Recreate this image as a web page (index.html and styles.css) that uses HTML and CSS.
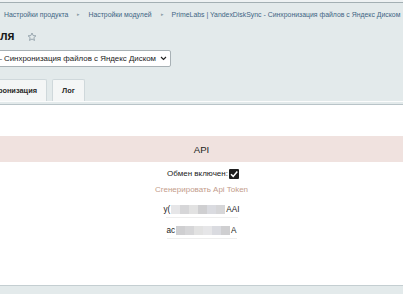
FILE: index.html
```html
<!DOCTYPE html>
<html lang="ru">
<head>
<meta charset="utf-8">
<link rel="stylesheet" href="styles.css">
</head>
<body>
<div class="topline"></div>
<nav class="crumbs">
  <a class="crumb">Настройки продукта</a>
  <span class="sep">▸</span>
  <a class="crumb">Настройки модулей</a>
  <span class="sep">▸</span>
  <a class="crumb">PrimeLabs | YandexDiskSync - Синхронизация файлов с Яндекс Диском</a>
</nav>
<div class="titlerow">
  <h1 class="title">ля</h1>
  <svg class="star" viewBox="0 0 12 12" width="10" height="10"><path d="M6 1.2 L7.4 4.3 L10.7 4.6 L8.2 6.8 L9 10.1 L6 8.4 L3 10.1 L3.8 6.8 L1.3 4.6 L4.6 4.3 Z" fill="none" stroke="#8a9aa3" stroke-width="1" stroke-linejoin="round"/></svg>
</div>
<div class="selrow">
  <div class="select"><span class="seltext">– Синхронизация файлов с Яндекс Диском</span>
    <svg class="chev" viewBox="0 0 8 6" width="7" height="5"><path d="M1 1.2 L4 4.2 L7 1.2" fill="none" stroke="#222" stroke-width="1.4"/></svg>
  </div>
</div>
<div class="tabs">
  <div class="tab tab-first">ронизация</div>
  <div class="tab">Лог</div>
</div>
<div class="tabline"></div>
<main class="content">
  <div class="heading">API</div>
  <div class="field">
    <div class="row"><span class="label">Обмен включен:</span><span class="check"><svg viewBox="0 0 10 10" width="10" height="10"><path d="M2 5.2 L4.2 7.4 L8.3 2.6" fill="none" stroke="#fff" stroke-width="1.5"/></svg></span></div>
    <a class="gen">Сгенерировать Api Token</a>
    <div class="token"><span>y(</span><span class="blur"><i class="b1"></i><i class="b2"></i><i class="b3"></i><i class="b4"></i><i class="b5"></i><i class="b2"></i></span><span>AAI</span></div>
    <div class="token t2"><span>ac</span><span class="blur"><i class="b4"></i><i class="b2"></i><i class="b3"></i><i class="b1"></i><i class="b5"></i><i class="b4"></i></span><span>A</span></div>
  </div>
</main>
<div class="footer"></div>
</body>
</html>
```
FILE: styles.css
```css
* { box-sizing: border-box; }
html, body { margin: 0; padding: 0; }
body {
  background: #e3eaeb;
  font-family: "Liberation Sans", Arial, sans-serif;
  width: 403px;
  height: 294px;
  overflow: hidden;
  color: #000;
}
.topline {
  height: 3px;
  background: #eef2f3;
  border-bottom: 1px solid #a3afb3;
}
.crumbs {
  display: flex;
  align-items: center;
  white-space: nowrap;
  padding: 4px 0 0 4px;
  height: 18px;
  font-size: 6.9px;
  color: #3e6584;
}
.crumb { color: #3e6584; }
.sep { font-size: 5px; color: #8b9ca6; margin: 0 8px 0 9px; }
.titlerow {
  display: flex;
  align-items: center;
  height: 22px;
  margin-top: 4px;
}
.title {
  margin: 0;
  font-size: 12px;
  font-weight: bold;
  color: #1a1a1a;
  line-height: 16px;
}
.star { margin-left: 12px; margin-top: 1px; }
.selrow { margin-top: 3px; height: 18px; }
.select {
  display: flex;
  align-items: center;
  width: 180px;
  height: 17px;
  margin-left: -9px;
  justify-content: flex-end;
  background: #fff;
  border: 1px solid #a8b1b5;
  border-radius: 2px;
  font-size: 7.9px;
  white-space: nowrap;
  padding-right: 3px;
  color: #1a1a1a;
}
.seltext { margin-right: 4px; }
.chev { flex: none; }
.tabs {
  display: flex;
  align-items: flex-end;
  margin-top: 11px;
  height: 22px;
}
.tab {
  height: 22px;
  display: flex;
  align-items: center;
  justify-content: center;
  background: #f4f6f6;
  border: 1px solid #cfd8db;
  border-bottom: none;
  border-radius: 2px 2px 0 0;
  font-size: 7.4px;
  font-weight: bold;
  color: #2a2a2a;
  padding: 0 9px;
}
.tab-first {
  margin-left: -10px;
  width: 57px;
  justify-content: flex-end;
  padding-right: 9px;
  margin-right: 5px;
}
.tabline {
  height: 4px;
  border-top: 1px solid #fbfcfc;
  border-bottom: 1px solid #b9c4c8;
}
.content {
  background: #fff;
  height: 180px;
  padding-top: 31px;
}
.heading {
  background: #f0e2df;
  height: 26px;
  display: flex;
  align-items: center;
  justify-content: center;
  font-size: 9.6px;
  color: #222;
}
.field {
  display: flex;
  flex-direction: column;
  align-items: center;
  padding-top: 6px;
}
.row {
  display: flex;
  align-items: center;
  height: 11px;
  margin-left: 3px;
}
.label { font-size: 8px; color: #222; margin-right: 1px; }
.check {
  width: 10px;
  height: 10px;
  background: #1e1e1e;
  border-radius: 1px;
  display: flex;
}
.gen {
  font-size: 8px;
  color: #c39c8b;
  margin-top: 6px;
  line-height: 10px;
}
.token {
  display: flex;
  align-items: center;
  font-size: 8.2px;
  color: #222;
  margin-top: 8px;
  height: 12px;
  width: 72px;
  border-bottom: 1px solid #eeeeee;
  justify-content: center;
  padding-bottom: 2px;
  box-sizing: content-box;
}
.t2 { margin-top: 6px; width: 70px; }
.blur { display: flex; height: 9px; margin: 0 1px; }
.blur i { display: block; width: 9px; height: 9px; }
.b1 { background: #e6e6e8; }
.b2 { background: #d6d6d8; }
.b3 { background: #e2e2e2; }
.b4 { background: #cfcfd1; }
.b5 { background: #dadbe0; }
.footer {
  border-top: 1px solid #c4ced1;
  height: 8px;
  background: #e3eaeb;
}
```
